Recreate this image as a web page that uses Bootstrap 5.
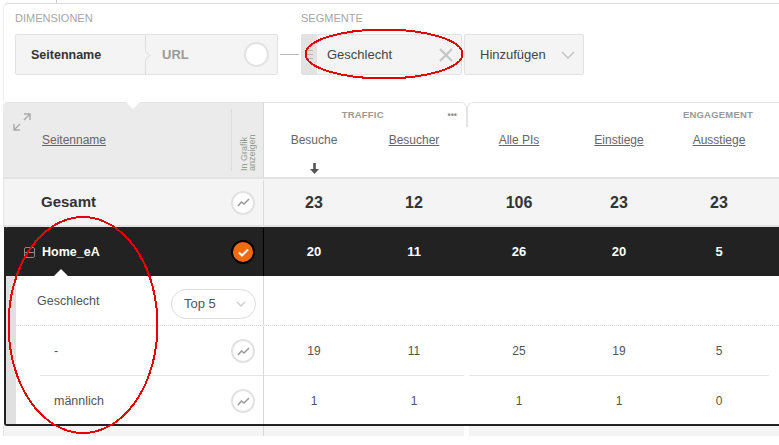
<!DOCTYPE html>
<html lang="de">
<head>
    <meta charset="UTF-8">
    <meta name="viewport" content="width=device-width, initial-scale=1.0">
    <title>Seitenbericht</title>
    <link href="https://cdn.jsdelivr.net/npm/bootstrap@5.3.0/dist/css/bootstrap.min.css" rel="stylesheet">
    <style>
        html, body { height: 445px; overflow: hidden; }
        body { background: #fff; font-family: "Liberation Sans", Arial, sans-serif; color: #444; position: relative; font-size: 12px; }

        .top-tick { width: 1px; height: 3px; background: #ccc; margin-left: 56px; }
        .filter-panel { margin-left: 3px; height: 99px; border-top: 1px solid #d9d9d9; border-left: 1px solid #eee; border-top-left-radius: 5px; padding: 8px 0 0 11px; }
        .filter-label { font-size: 11px; line-height: 13px; color: #a6a6a6; margin-bottom: 9px; }
        .chip-box { height: 41px; background: #f4f4f4; border: 1px solid #e2e2e2; border-radius: 2px; font-size: 13px; }
        .dim-box { width: 263px; }
        .dim-first { width: 130px; padding: 1px 0 0 15px; font-weight: 700; font-size: 12.5px; color: #333; border-right: 1px solid #ddd; height: 100%; position: relative; }
        .dim-first::after { content: ""; position: absolute; right: -4px; top: 17px; width: 7px; height: 7px; background: #f4f4f4; border-top: 1px solid #ddd; border-right: 1px solid #ddd; transform: rotate(45deg); }
        .dim-second { padding: 1px 0 0 16px; font-weight: 700; color: #999; }
        .toggle-ring { width: 25px; height: 25px; border-radius: 50%; background: #fff; border: 2px solid #e2e2e2; margin-right: 8px; }
        .link-dash { width: 19px; height: 1px; background: #bbb; margin: 0 2px 0 2px; }
        .seg-box { width: 161px; }
        .seg-grip { width: 15px; height: 100%; background: #e2e2e2; }
        .seg-name { padding-left: 10px; color: #444; }
        .add-box { width: 120px; margin-left: 2px; padding: 1px 0 0 15px; font-weight: 400; color: #444; }

        .report { margin-left: 3px; position: relative; }
        .head-row { height: 75px; }
        .name-col { width: 261px; flex: none; border-right: 1px solid #d9d9d9; }
        .head-name { background: #ebebeb; border-top: 1px solid #e4e4e4; border-top-left-radius: 5px; position: relative; }
        .notch-down { position: absolute; left: 123px; top: -1px; width: 0; height: 0; border: 7px solid transparent; border-top-color: #fff; border-bottom-width: 0; }
        .expand-icon { position: absolute; left: 10px; top: 10px; }
        .head-title { padding: 28px 0 0 39px; color: #666; font-size: 12px; text-decoration: underline; }
        .chart-head { width: 32px; height: 62px; margin: 6px 0 0 auto; border-left: 1px solid #ddd; }
        .chart-head span { writing-mode: vertical-rl; transform: rotate(180deg); font-size: 9px; line-height: 8px; color: #8f9c8f; margin: 18px 0 0 8px; }
        .group-row { height: 25px; }
        .group-traffic { width: 203px; border-top: 1px solid #e4e4e4; border-right: 1px solid #e4e4e4; border-top-right-radius: 6px; }
        .group-engage { flex: 1; border-top: 1px solid #e4e4e4; border-left: 1px solid #e4e4e4; border-top-left-radius: 6px; padding-right: 26px; }
        .group-text { font-size: 9.5px; font-weight: 700; color: #999; letter-spacing: .2px; }
        .group-dots { font-size: 9px; line-height: 9px; font-weight: 700; color: #888; margin-left: auto; margin-right: 9px; }
        .data-col { width: 100px; flex: none; text-align: center; }
        .gap-col { width: 5px; flex: none; }
        .label-row { font-size: 12px; color: #666; padding-top: 4px; }
        .label-row u { text-underline-offset: 1px; }
        .sort-arrow { display: block; margin: 14px auto 0; }

        .divider-row { height: 2px; background: #e2e2e2; }
        .total-row { height: 48px; padding-top: 1px; background: #f4f4f4; border-left: 1px solid #e4e4e4; border-bottom: 2px solid #e2e2e2; font-weight: 700; font-size: 16px; color: #333; }
        .total-row .name-col { width: 260px; }
        .total-name { padding-left: 37px; font-size: 15px; }
        .trend-btn { width: 24px; height: 24px; border-radius: 50%; background: #fff; border: 2px solid #e2e2e2; margin-right: 8px; flex: none; }

        .open-block { margin-left: 1px; border-left: 2px solid #222; border-bottom: 2px solid #222; border-bottom-left-radius: 3px; }
        .dark-row { height: 49px; padding-top: 1px; background: #222; color: #fff; font-weight: 700; font-size: 13px; margin-left: -2px; position: relative; border-top-left-radius: 4px; }
        .dark-row .name-col { border-right-color: #000; width: 260px; }
        .home-name { font-size: 12.5px; }
        .minus-box { width: 11px; height: 11px; border: 1px solid #888; border-radius: 2px; margin: 0 7px 0 20px; position: relative; }
        .minus-box::after { content: ""; position: absolute; left: 0; right: 0; top: 4px; height: 1px; background: #888; }
        .notch-up { position: absolute; left: 50px; bottom: 0; width: 0; height: 0; border: 7px solid transparent; border-bottom-color: #fff; border-top-width: 0; }
        .check-btn { width: 24px; height: 24px; border-radius: 50%; background: #f26a0f; border: 2px solid #000; margin-right: 8px; }
        .sub-block { border-left: 10px solid #e0e0e0; }
        .sub-row { height: 50px; }
        .sub-row .name-col { padding-top: 6px; }
        .sub-block .name-col { width: 248px; }
        .sub-head { border-bottom: 1px dotted #d6d6d6; }
        .sub-label { padding-left: 21px; color: #555; font-size: 12.5px; padding-bottom: 4px; }
        .top-pill { width: 85px; height: 30px; border: 1px solid #ddd; border-radius: 15px; padding-left: 12px; font-size: 13px; color: #555; margin: 0 7px 0 auto; }
        .top-pill svg { margin-left: auto; margin-right: 9px; }
        .value-row { height: 50px; color: #555; }
        .value-row .name-col { position: relative; }
        .value-name { padding-left: 38px; color: #555; font-size: 12.5px; }
        .line-name::after { content: ""; position: absolute; left: 24px; right: 0; bottom: 0; height: 1px; background: #e6e6e6; }
        .line-data { height: 100%; border-bottom: 1px solid #e6e6e6; }
        .value-row.last-row { height: 48px; }
        .last-row .name-col, .last-row .data-col { padding-top: 2px; }
        .foot-row { height: 10px; }
        .foot-row .name-col { background: #f4f4f4; border-left: 1px solid #e4e4e4; }
        .foot-fill { width: 200px; background: #f4f4f4; }
        .foot-fill-b { flex: 1; background: #f4f4f4; }

        .red-marks { position: absolute; left: 0; top: 0; pointer-events: none; }
    </style>
</head>
<body>
    <div class="top-tick"></div>
    <div class="filter-panel">
        <div class="d-flex">
            <div>
                <div class="filter-label">DIMENSIONEN</div>
                <div class="chip-box dim-box d-flex align-items-center">
                    <div class="dim-first d-flex align-items-center">Seitenname</div>
                    <div class="dim-second">URL</div>
                    <div class="toggle-ring ms-auto"></div>
                </div>
            </div>
            <div class="d-flex flex-column">
                <div class="filter-label">&nbsp;</div>
                <div class="d-flex align-items-center flex-grow-1"><div class="link-dash"></div></div>
            </div>
            <div>
                <div class="filter-label">SEGMENTE</div>
                <div class="d-flex">
                    <div class="chip-box seg-box d-flex align-items-center">
                        <div class="seg-grip d-flex align-items-center justify-content-center">
                            <svg width="7" height="9" viewBox="0 0 7 9"><path d="M0 .5h7M0 4.5h7M0 8.5h7" stroke="#b5b5b5" stroke-width="1" fill="none"/></svg>
                        </div>
                        <div class="seg-name">Geschlecht</div>
                        <svg class="ms-auto me-2" width="14" height="14" viewBox="0 0 14 14"><path d="M1 1l12 12M13 1L1 13" stroke="#c4c4c4" stroke-width="2" fill="none"/></svg>
                    </div>
                    <div class="chip-box add-box d-flex align-items-center">
                        Hinzufügen
                        <svg class="ms-auto me-2" width="14" height="8" viewBox="0 0 14 8"><path d="M1 1l6 6 6-6" stroke="#c4c4c4" stroke-width="1.5" fill="none"/></svg>
                    </div>
                </div>
            </div>
        </div>
    </div>

    <div class="report">
        <div class="head-row d-flex">
            <div class="name-col head-name d-flex">
                <div class="notch-down"></div>
                <svg class="expand-icon" width="18" height="18" viewBox="0 0 18 18"><path d="M11 1h6v6M17 1l-6 6M7 17H1v-6M1 17l6-6" stroke="#aaa" stroke-width="1.4" fill="none"/></svg>
                <div class="head-title">Seitenname</div>
                <div class="chart-head d-flex"><span>In Grafik<br>anzeigen</span></div>
            </div>
            <div class="flex-grow-1">
                <div class="group-row d-flex">
                    <div class="group-traffic d-flex align-items-center">
                        <span class="group-text ms-5 ps-4">&nbsp;&nbsp;TRAFFIC</span>
                        <span class="group-dots">•••</span>
                    </div>
                    <div class="group-engage d-flex align-items-center justify-content-end">
                        <span class="group-text">ENGAGEMENT</span>
                    </div>
                </div>
                <div class="d-flex label-row">
                    <div class="data-col">Besuche
                        <svg class="sort-arrow" width="9" height="11" viewBox="0 0 9 11"><path d="M3.2 0h2.6v6H9l-4.5 5L0 6h3.2z" fill="#555"/></svg>
                    </div>
                    <div class="data-col"><u>Besucher</u></div>
                    <div class="gap-col"></div>
                    <div class="data-col"><u>Alle PIs</u></div>
                    <div class="data-col"><u>Einstiege</u></div>
                    <div class="data-col"><u>Ausstiege</u></div>
                </div>
            </div>
        </div>
        <div class="divider-row"></div>

        <div class="total-row d-flex align-items-center">
            <div class="name-col d-flex align-items-center h-100">
                <div class="total-name">Gesamt</div>
                <div class="trend-btn ms-auto d-flex align-items-center justify-content-center">
                    <svg width="13" height="9" viewBox="0 0 13 9"><path d="M1 8l3.5-4 2.5 2L12 1" stroke="#999" stroke-width="1.5" fill="none"/></svg>
                </div>
            </div>
            <div class="data-col">23</div>
            <div class="data-col">12</div>
            <div class="gap-col"></div>
            <div class="data-col">106</div>
            <div class="data-col">23</div>
            <div class="data-col">23</div>
        </div>

        <div class="open-block">
            <div class="dark-row d-flex align-items-center">
                <div class="name-col d-flex align-items-center h-100">
                    <div class="minus-box"></div>
                    <div class="home-name">Home_eA</div>
                    <div class="check-btn ms-auto d-flex align-items-center justify-content-center">
                        <svg width="11" height="9" viewBox="0 0 11 9"><path d="M1 4.5l3 3 6-6" stroke="#fff" stroke-width="2" fill="none"/></svg>
                    </div>
                </div>
                <div class="notch-up"></div>
                <div class="data-col">20</div>
                <div class="data-col">11</div>
                <div class="gap-col"></div>
                <div class="data-col">26</div>
                <div class="data-col">20</div>
                <div class="data-col">5</div>
            </div>
            <div class="sub-block">
                <div class="sub-row sub-head d-flex">
                    <div class="name-col d-flex align-items-center">
                        <div class="sub-label">Geschlecht</div>
                        <div class="top-pill d-flex align-items-center">
                            Top 5
                            <svg width="10" height="6" viewBox="0 0 10 6"><path d="M1 1l4 4 4-4" stroke="#ccc" stroke-width="1.4" fill="none"/></svg>
                        </div>
                    </div>
                </div>
                <div class="value-row d-flex">
                    <div class="name-col line-name d-flex align-items-center">
                        <div class="value-name">-</div>
                        <div class="trend-btn ms-auto d-flex align-items-center justify-content-center">
                            <svg width="13" height="9" viewBox="0 0 13 9"><path d="M1 8l3.5-4 2.5 2L12 1" stroke="#999" stroke-width="1.5" fill="none"/></svg>
                        </div>
                    </div>
                    <div class="data-col line-data d-flex align-items-center justify-content-center">19</div>
                    <div class="data-col line-data d-flex align-items-center justify-content-center">11</div>
                    <div class="gap-col"></div>
                    <div class="data-col line-data d-flex align-items-center justify-content-center">25</div>
                    <div class="data-col line-data d-flex align-items-center justify-content-center">19</div>
                    <div class="data-col line-data d-flex align-items-center justify-content-center">5</div>
                </div>
                <div class="value-row last-row d-flex">
                    <div class="name-col d-flex align-items-center">
                        <div class="value-name">männlich</div>
                        <div class="trend-btn ms-auto d-flex align-items-center justify-content-center">
                            <svg width="13" height="9" viewBox="0 0 13 9"><path d="M1 8l3.5-4 2.5 2L12 1" stroke="#999" stroke-width="1.5" fill="none"/></svg>
                        </div>
                    </div>
                    <div class="data-col d-flex align-items-center justify-content-center">1</div>
                    <div class="data-col d-flex align-items-center justify-content-center">1</div>
                    <div class="gap-col"></div>
                    <div class="data-col d-flex align-items-center justify-content-center">1</div>
                    <div class="data-col d-flex align-items-center justify-content-center">1</div>
                    <div class="data-col d-flex align-items-center justify-content-center">0</div>
                </div>
            </div>
        </div>
        <div class="foot-row d-flex">
            <div class="name-col"></div>
            <div class="foot-fill"></div>
            <div class="gap-col"></div>
            <div class="foot-fill-b"></div>
        </div>
    </div>

    <svg class="red-marks" width="779" height="445" viewBox="0 0 779 445" shape-rendering="crispEdges">
        <ellipse cx="384" cy="54" rx="78.5" ry="24.5" fill="none" stroke="#e60000" stroke-width="2"/>
        <ellipse cx="83" cy="325" rx="74.5" ry="108" fill="none" stroke="#e60000" stroke-width="2"/>
    </svg>
</body>
</html>
